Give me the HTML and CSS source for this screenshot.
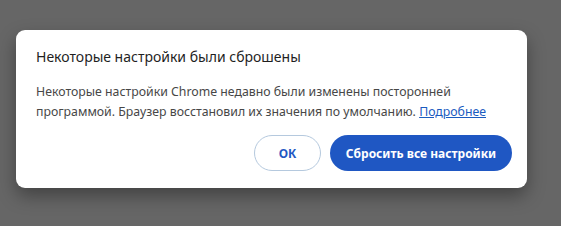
FILE: index.html
```html
<!DOCTYPE html>
<html lang="ru">
<head>
<meta charset="utf-8">
<link rel="stylesheet" href="styles.css">
</head>
<body>
<div class="dialog">
  <h1 class="title">Некоторые настройки были сброшены</h1>
  <p class="text"><span>Некоторые настройки Chrome недавно были изменены посторонней программой. Браузер восстановил их значения по умолчанию.</span> <a class="link" href="#">Подробнее</a></p>
  <div class="actions">
    <button class="btn btn-ok">ОК</button>
    <button class="btn btn-primary">Сбросить все настройки</button>
  </div>
</div>
</body>
</html>
```
FILE: styles.css
```css
html, body {
  margin: 0;
  padding: 0;
  background: #666666;
  height: 100%;
  overflow: hidden;
}
body {
  padding: 30px 0 0 16px;
  box-sizing: border-box;
  font-family: "Noto Sans", "Open Sans", sans-serif;
}
.dialog {
  width: 511px;
  height: 158px;
  box-sizing: border-box;
  background: #ffffff;
  border-radius: 9px;
  padding: 16px 15px 0 20px;
  box-shadow: 0 8px 18px rgba(0, 0, 0, 0.35);
}
.title {
  margin: 0;
  font-size: 14px;
  font-weight: 400;
  color: #1f1f1f;
  line-height: 22px;
}
.text {
  margin: 14px 0 0 0;
  font-size: 12.3px;
  line-height: 20px;
  color: #474747;
  width: 470px;
}
.link {
  color: #1a5bbf;
  text-decoration: underline;
}
.actions {
  display: flex;
  justify-content: flex-end;
  gap: 9px;
  margin-top: 13px;
}
.btn {
  height: 36px;
  border-radius: 18px;
  font-family: "Noto Sans", "Open Sans", sans-serif;
  font-size: 12px;
  font-weight: 700;
  padding: 0;
  white-space: nowrap;
  box-sizing: border-box;
}
.btn-ok {
  width: 67px;
  background: #ffffff;
  border: 1px solid #b5c9de;
  color: #1f57c3;
}
.btn-primary {
  width: 182px;
  background: #1f57c3;
  border: none;
  color: #ffffff;
}
```
